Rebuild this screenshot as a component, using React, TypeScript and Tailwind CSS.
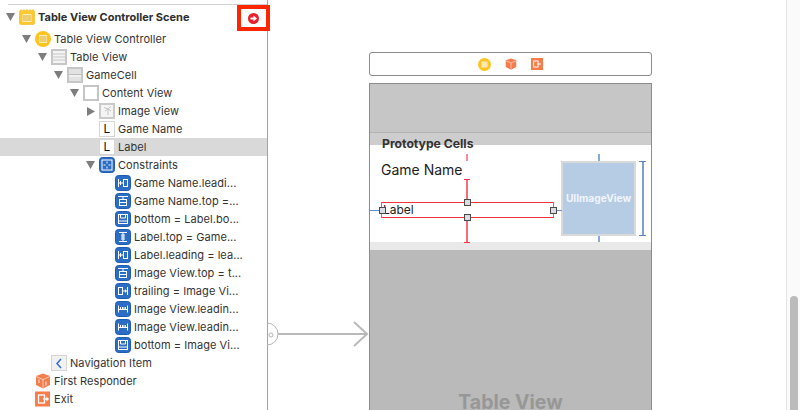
import type { ReactNode } from "react";

type Kind =
  | "scene" | "controller" | "table" | "cell" | "content" | "image" | "label"
  | "constraints" | "leading" | "top" | "bottom" | "center" | "trailing" | "width"
  | "nav" | "cube" | "exit";

type Row = { depth: number; label: string; kind: Kind; open?: boolean; closed?: boolean; selected?: boolean };

const rows: Row[] = [
  { depth: 1, label: "Table View Controller", kind: "controller", open: true },
  { depth: 2, label: "Table View", kind: "table", open: true },
  { depth: 3, label: "GameCell", kind: "cell", open: true },
  { depth: 4, label: "Content View", kind: "content", open: true },
  { depth: 5, label: "Image View", kind: "image", closed: true },
  { depth: 5, label: "Game Name", kind: "label" },
  { depth: 5, label: "Label", kind: "label", selected: true },
  { depth: 5, label: "Constraints", kind: "constraints", open: true },
  { depth: 6, label: "Game Name.leadi...", kind: "leading" },
  { depth: 6, label: "Game Name.top =...", kind: "top" },
  { depth: 6, label: "bottom = Label.bo...", kind: "bottom" },
  { depth: 6, label: "Label.top = Game...", kind: "center" },
  { depth: 6, label: "Label.leading = lea...", kind: "leading" },
  { depth: 6, label: "Image View.top = t...", kind: "top" },
  { depth: 6, label: "trailing = Image Vi...", kind: "trailing" },
  { depth: 6, label: "Image View.leadin...", kind: "width" },
  { depth: 6, label: "Image View.leadin...", kind: "width" },
  { depth: 6, label: "bottom = Image Vi...", kind: "bottom" },
  { depth: 2, label: "Navigation Item", kind: "nav" },
  { depth: 1, label: "First Responder", kind: "cube" },
  { depth: 1, label: "Exit", kind: "exit" },
];

function Blue({ children }: { children: ReactNode }) {
  return (
    <svg width="16" height="16" viewBox="0 0 16 16">
      <rect x="0.5" y="0.5" width="15" height="15" rx="3" fill="#2b6cc4" stroke="#1f5cb0" />
      {children}
    </svg>
  );
}

function Icon({ kind }: { kind: Kind }) {
  switch (kind) {
    case "scene":
      return (
        <svg width="16" height="16" viewBox="0 0 16 16">
          <path d="M0.5 2.5 L2 0.5 L3.5 2 L5 0.5 L6.5 2 L8 0.5 L9.5 2 L11 0.5 L12.5 2 L14 0.5 L15.5 2.5 V14 Q15.5 15.5 14 15.5 H2 Q0.5 15.5 0.5 14 Z" fill="#fdc92f" stroke="#ecb420" strokeWidth="0.6" />
          <rect x="3.5" y="5" width="9" height="8" fill="#fdeeb8" />
          <path d="M4 7H12M4 9H12M4 11H12" stroke="#d9a520" strokeWidth="0.9" />
        </svg>
      );
    case "controller":
      return (
        <svg width="16" height="16" viewBox="0 0 16 16">
          <circle cx="8" cy="8" r="8" fill="#fdc520" />
          <rect x="4" y="4" width="8" height="8" fill="#fdeeb8" />
          <path d="M4.5 6H11.5M4.5 8H11.5M4.5 10H11.5" stroke="#d9a520" strokeWidth="0.9" />
        </svg>
      );
    case "table":
      return (
        <svg width="16" height="16" viewBox="0 0 16 16">
          <rect x="0" y="0" width="16" height="16" fill="#c6c6c6" />
          <rect x="2" y="2" width="12" height="12" fill="#f4f4f4" />
          <path d="M2 5H14M2 8H14M2 11H14" stroke="#c6c6c6" />
        </svg>
      );
    case "cell":
      return (
        <svg width="16" height="16" viewBox="0 0 16 16">
          <rect x="0" y="0" width="16" height="16" fill="#c6c6c6" />
          <rect x="2" y="2" width="12" height="12" fill="#e2e2e2" />
          <path d="M2 7.5H14" stroke="#bdbdbd" />
          <rect x="2" y="8" width="12" height="2" fill="#f0f0f0" />
        </svg>
      );
    case "content":
      return (
        <svg width="16" height="16" viewBox="0 0 16 16">
          <rect x="0" y="0" width="16" height="16" fill="#c6c6c6" />
          <rect x="2" y="2" width="12" height="12" fill="#fff" />
        </svg>
      );
    case "image":
      return (
        <svg width="16" height="16" viewBox="0 0 16 16">
          <rect x="0" y="0" width="16" height="16" fill="#cacaca" />
          <rect x="2" y="2" width="12" height="12" fill="#f4f4f4" />
          <path d="M9 12V7M9 6L5 4.5M9 6L12 3.5M9 6L6 8M9 6L12 8" stroke="#c4c4c4" />
        </svg>
      );
    case "label":
      return (
        <span className="flex h-4 w-4 items-center justify-center border border-[#d6d6d6] bg-white text-[12px] leading-none text-[#111]">L</span>
      );
    case "constraints":
      return (
        <Blue>
          <rect x="3" y="3" width="10" height="10" fill="none" stroke="#fff" />
          <path d="M8 4.5V6.5M8 9.5V11.5M4.5 8H6.5M9.5 8H11.5" stroke="#fff" />
        </Blue>
      );
    case "leading":
      return (
        <Blue>
          <rect x="8.5" y="4.5" width="4" height="7" fill="none" stroke="#fff" />
          <path d="M3.5 4V12M3.5 8H8.5M5.5 6V10" stroke="#fff" />
        </Blue>
      );
    case "top":
      return (
        <Blue>
          <path d="M3 3.5H13M8 3.5V6" stroke="#fff" />
          <rect x="4.5" y="6.5" width="7" height="6" fill="none" stroke="#fff" />
          <path d="M4.5 9.5H11.5" stroke="#fff" />
        </Blue>
      );
    case "bottom":
      return (
        <Blue>
          <rect x="3.5" y="3.5" width="9" height="9" fill="none" stroke="#fff" />
          <path d="M5.5 7H10.5M3.5 10H12.5M5.5 4V7M10.5 4V7" stroke="#fff" />
        </Blue>
      );
    case "center":
      return (
        <Blue>
          <path d="M4 3.5H12M4 12.5H12M8 3.5V12.5M6 6H10M6 8H10M6 10H10" stroke="#fff" />
        </Blue>
      );
    case "trailing":
      return (
        <Blue>
          <rect x="3.5" y="4.5" width="4" height="7" fill="none" stroke="#fff" />
          <path d="M12.5 4V12M7.5 8H12.5M10.5 6.5V9.5" stroke="#fff" />
        </Blue>
      );
    case "width":
      return (
        <Blue>
          <path d="M3.5 4.5V11.5M12.5 4.5V11.5M3.5 8.5H12.5M5.5 6V8M7.5 6V8M9 6V8M10.5 6V8" stroke="#fff" />
        </Blue>
      );
    case "nav":
      return (
        <span className="flex h-4 w-4 items-center justify-center border border-[#d6d6d6] bg-[#f1f1f1]">
          <svg width="8" height="11" viewBox="0 0 8 11">
            <path d="M6 1L2 5.5L6 10" fill="none" stroke="#2f72cf" strokeWidth="1.5" />
          </svg>
        </span>
      );
    case "cube":
      return (
        <svg width="16" height="16" viewBox="0 0 16 16">
          <path d="M8 0.5L15 3V12L8 15.5L1 12V3Z" fill="#f47d4e" />
          <path d="M1 3.5L8 6.5L15 3.5M8 6.5V15" fill="none" stroke="#fbd3bf" strokeWidth="0.9" />
          <path d="M11 8.5V12.5M4 6.5V10" stroke="#fff" strokeWidth="0.9" />
        </svg>
      );
    case "exit":
      return (
        <svg width="16" height="16" viewBox="0 0 16 16">
          <rect width="15" height="15" y="0.5" fill="#f77c4a" />
          <rect x="3.5" y="4" width="6" height="8" fill="none" stroke="#fff" strokeWidth="1.3" />
          <path d="M8 8H12.5" stroke="#fff" strokeWidth="1.5" />
          <path d="M11.5 5.5L14 8L11.5 10.5Z" fill="#fff" />
        </svg>
      );
  }
}

function Triangle({ open, closed }: { open?: boolean; closed?: boolean }) {
  if (open)
    return (
      <svg width="9" height="8" viewBox="0 0 9 8">
        <path d="M0 0H9L4.5 8Z" fill="#7d7d7d" />
      </svg>
    );
  if (closed)
    return (
      <svg width="8" height="9" viewBox="0 0 8 9">
        <path d="M0 0L8 4.5L0 9Z" fill="#7d7d7d" />
      </svg>
    );
  return null;
}

function TreeRow({ row }: { row: Row }) {
  return (
    <div
      className={`flex h-[18px] items-center ${row.selected ? "bg-[#d9d9d9]" : ""}`}
      style={{ paddingLeft: 3 + 16 * row.depth }}
    >
      <span className="flex w-[16px] shrink-0 items-center justify-center pr-[1px]">
        <Triangle open={row.open} closed={row.closed} />
      </span>
      <span className="flex h-4 w-4 shrink-0 items-center justify-center">
        <Icon kind={row.kind} />
      </span>
      <span className="ml-[3px] whitespace-nowrap text-[11px] tracking-[0.05px] text-[#333]">{row.label}</span>
    </div>
  );
}

function Handle({ className }: { className: string }) {
  return <span className={`absolute h-[7px] w-[7px] border border-[#4a4a4a] bg-[#dcdce4] ${className}`} />;
}

function Cell() {
  return (
    <div className="relative flex h-[97px] bg-white pl-[11px]">
      <div className="flex w-[173px] flex-col">
        <span className="mt-[15px] h-[20px] text-[14px] leading-[20px] text-[#222]">Game Name</span>
        <div className="mt-[22px] flex h-[16px] items-center border-x border-y border-x-[#7f7fef] border-y-[#f5333f]">
          <span className="pl-[1px] text-[12px] leading-none text-[#222]">Label</span>
        </div>
      </div>

      <div className="ml-[7px] flex w-[75px] flex-col items-center pt-[9px]">
        <span className="h-[7px] w-[2px] bg-[#85acd8]" />
        <div className="flex h-[75px] w-[75px] items-center justify-center border-2 border-[#d9d9d9] bg-[#b6cce5]">
          <span className="text-[10.2px] font-bold text-[#f1f4f8]">UIImageView</span>
        </div>
        <span className="h-[6px] w-[2px] bg-[#85acd8]" />
      </div>

      <div className="ml-[3px] flex w-[7px] flex-col items-center pt-[16px]">
        <span className="h-px w-[7px] bg-[#5b86b8]" />
        <span className="h-[73px] w-[2px] bg-[#7ba0cb]" />
        <span className="h-px w-[7px] bg-[#5b86b8]" />
      </div>

      {/* selection handles and guides sit over the cell */}
      <span className="absolute left-0 top-[65px] h-px w-[9px] bg-[#5b93d0]" />
      <span className="absolute left-[187px] top-[65px] h-px w-[5px] bg-[#5b93d0]" />
      <span className="absolute left-[96px] top-[9px] h-[7px] w-[2px] bg-[#fa8a95]" />
      <span className="absolute left-[96px] top-[34px] h-[23px] w-[2px] bg-[#fa6a78]" />
      <span className="absolute left-[94px] top-[34px] h-px w-[6px] bg-[#f5333f]" />
      <span className="absolute left-[96px] top-[72px] h-[25px] w-[2px] bg-[#fa6a78]" />
      <span className="absolute left-[94px] top-[97px] h-px w-[6px] bg-[#f5333f]" />
      <Handle className="left-[9px] top-[62px]" />
      <Handle className="left-[180px] top-[62px]" />
      <Handle className="left-[94px] top-[54px]" />
      <Handle className="left-[94px] top-[69px]" />
    </div>
  );
}

function Canvas() {
  return (
    <main className="relative flex-1 bg-white">
      {/* scene dock */}
      <div className="absolute left-[101px] top-[52px] flex h-[24px] w-[283px] items-center justify-center gap-[14px] rounded-[3px] border border-[#8c8c8c] bg-white">
        <svg width="13" height="13" viewBox="0 0 13 13">
          <circle cx="6.5" cy="6.5" r="6.5" fill="#fdc520" />
          <rect x="3.5" y="3.5" width="6" height="6" fill="#fbe9b5" />
        </svg>
        <svg width="12" height="12" viewBox="0 0 16 16">
          <path d="M8 0.5L15 3V12L8 15.5L1 12V3Z" fill="#f47d4e" />
          <path d="M1 3.5L8 6.5L15 3.5M8 6.5V15" fill="none" stroke="#fbd3bf" />
        </svg>
        <svg width="12" height="12" viewBox="0 0 16 16">
          <rect width="16" height="16" fill="#f77c4a" />
          <rect x="3.5" y="4" width="6" height="8" fill="none" stroke="#fff" strokeWidth="1.3" />
          <path d="M8 8H13" stroke="#fff" strokeWidth="1.5" />
        </svg>
      </div>

      {/* scene */}
      <div className="absolute left-[101px] top-[83px] flex h-[327px] w-[283px] flex-col border-x border-t border-[#8c8c8c]">
        <div className="h-[49px] border-b border-[#b2b2b2] bg-[#c6c6c6]" />
        <div className="relative z-10 flex h-[12px] items-start bg-[#cdcdcd] pl-[12px]">
          <span className="whitespace-nowrap text-[12.2px] font-bold leading-[22px] text-[#333]">Prototype Cells</span>
        </div>
        <Cell />
        <div className="h-[8px] bg-[#e9e9e9]" />
        <div className="flex flex-1 justify-center bg-[#bababa] pt-[144px]">
          <span className="whitespace-nowrap text-[19.5px] font-bold leading-[16px] text-[#979797]">Table View</span>
        </div>
      </div>

      {/* segue */}
      <svg className="absolute -left-[1px] top-[320px]" width="103" height="28" viewBox="0 0 103 28">
        <path d="M0 3A11 11 0 0 1 0 25" fill="none" stroke="#b5b5b5" />
        <circle cx="4" cy="15" r="2" fill="none" stroke="#b5b5b5" />
        <path d="M11 14H100" stroke="#b9b9b9" strokeWidth="2" />
        <path d="M87 2L100 14L87 26" fill="none" stroke="#b9b9b9" strokeWidth="2" />
      </svg>
    </main>
  );
}

export default function App() {
  return (
    <div className="relative flex h-[410px] w-[800px] overflow-hidden bg-white font-['Inter','Liberation_Sans',sans-serif]">
      <aside className="w-[268px] shrink-0 border-r border-[#a3a3a3] bg-white">
        <div className="ml-2 mt-1 h-px bg-[#d0d0d0]" />
        <div className="pt-[3px]">
          <div className="mb-1 flex h-[18px] items-center pl-[3px]">
            <span className="flex w-[16px] shrink-0 items-center justify-center pr-[1px]">
              <Triangle open />
            </span>
            <Icon kind="scene" />
            <span className="ml-[3px] whitespace-nowrap text-[11px] font-bold text-[#2e2e2e]">Table View Controller Scene</span>
          </div>
          {rows.map((row, i) => (
            <TreeRow key={i} row={row} />
          ))}
        </div>
      </aside>
      <Canvas />
      <div className="flex w-[14px] shrink-0 justify-center border-l border-[#e4e4e4] bg-[#fafafa] pl-[1px] pt-[296px]">
        <div className="h-[140px] w-[8px] shrink-0 rounded-full bg-[#bbbbbb]" />
      </div>

      {/* red annotation around the scene warning arrow */}
      <div className="absolute left-[237px] top-[5px] flex h-[26px] w-[33px] items-center justify-center border-[4px] border-[#fe2600] bg-white">
        <svg width="11" height="11" viewBox="0 0 11 11">
          <circle cx="5.5" cy="5.5" r="5.5" fill="#e8202a" />
          <path d="M2.5 5.5H6" stroke="#fff" strokeWidth="2" />
          <path d="M5.5 2.5L9 5.5L5.5 8.5Z" fill="#fff" />
        </svg>
      </div>
    </div>
  );
}
